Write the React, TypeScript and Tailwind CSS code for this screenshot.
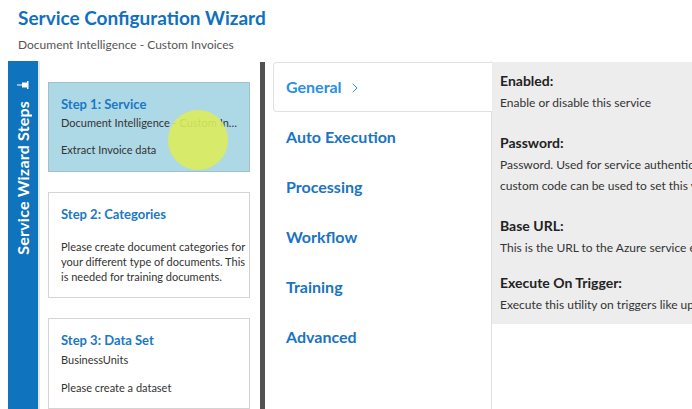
import { ChevronRight } from 'lucide-react'

const tabs = ['General', 'Auto Execution', 'Processing', 'Workflow', 'Training', 'Advanced']

const help = [
  { title: 'Enabled:', lines: ['Enable or disable this service'], gap: 'mb-[21px]' },
  {
    title: 'Password:',
    lines: [
      'Password. Used for service authentication. Alternatively',
      'custom code can be used to set this value',
    ],
    gap: 'mb-[21px]',
  },
  { title: 'Base URL:', lines: ['This is the URL to the Azure service endpoint'], gap: 'mb-[16px]' },
  { title: 'Execute On Trigger:', lines: ['Execute this utility on triggers like upload'], gap: '' },
]

const categoriesText = [
  'Please create document categories for',
  'your different type of documents. This',
  'is needed for training documents.',
]

function PinIcon() {
  return (
    <svg width="12" height="8" viewBox="0 0 12 8" className="text-white">
      <rect x="0" y="3.5" width="5" height="1" fill="currentColor" />
      <rect x="5" y="1.5" width="5" height="5" fill="currentColor" />
      <rect x="10" y="0" width="1.5" height="8" fill="currentColor" />
    </svg>
  )
}

export default function App() {
  return (
    <div
      className="w-[692px] h-[409px] overflow-hidden bg-white flex flex-col"
      style={{ fontFamily: 'Lato, "Open Sans", sans-serif' }}
    >
      <header className="pl-[18px] pt-[5px] h-[61px] shrink-0">
        <h1 className="text-[19px] leading-[26px] font-bold text-[#1070c0]">
          Service Configuration Wizard
        </h1>
        <p className="text-[12px] leading-[15px] mt-[6px] text-[#555]">
          Document Intelligence - Custom Invoices
        </p>
      </header>

      <div className="flex flex-1 min-h-0">
        <aside className="ml-[8px] w-[30px] bg-[#0f73bd] flex flex-col items-center pt-[20px] shrink-0">
          <PinIcon />
          <span className="[writing-mode:vertical-rl] rotate-180 mt-[12px] text-white font-bold text-[16px] tracking-[0.2px] whitespace-nowrap">
            Service Wizard Steps
          </span>
        </aside>
        <div className="w-[2px] bg-[#e4e6ea] shrink-0" />

        <div className="w-[210px] shrink-0 pl-[8px] pt-[21px] flex flex-col gap-[20px]">
          <div className="h-[90px] border border-[#a3bfcc] bg-[#add8e6] px-[12px] pt-[12px] relative overflow-hidden">
            <h3 className="text-[13px] leading-[18px] font-bold text-[#1a78c6]">Step 1: Service</h3>
            <p className="text-[11px] leading-[14px] mt-[3px] text-[#333] truncate">
              Document Intelligence - Custom Invoices
            </p>
            <p className="text-[11px] leading-[14px] mt-[13px] text-[#333]">Extract Invoice data</p>
            <div className="absolute left-[119px] top-[27px] w-[60px] h-[60px] rounded-full bg-[#dcec5c] opacity-90" />
          </div>
          <div className="h-[106px] border border-[#d4d4d4] bg-white pl-[12px] pr-[2px] pt-[12px] overflow-hidden">
            <h3 className="text-[13px] leading-[18px] font-bold text-[#1a78c6]">Step 2: Categories</h3>
            <div className="mt-[16px]">
              {categoriesText.map((l) => (
                <p key={l} className="text-[11px] leading-[15px] text-[#333] whitespace-nowrap">
                  {l}
                </p>
              ))}
            </div>
          </div>
          <div className="h-[91px] border border-[#d4d4d4] bg-white px-[12px] pt-[12px]">
            <h3 className="text-[13px] leading-[18px] font-bold text-[#1a78c6]">Step 3: Data Set</h3>
            <p className="text-[11px] leading-[14px] mt-[4px] text-[#333]">BusinessUnits</p>
            <p className="text-[11px] leading-[14px] mt-[14px] text-[#333]">Please create a dataset</p>
          </div>
        </div>

        <div className="w-[10px] shrink-0" />
        <div className="w-[5px] mt-[1px] bg-[#525252] shrink-0" />

        <nav className="w-[227px] shrink-0 pl-[8px] pt-[1px] border-r border-[#dde0e6] flex flex-col">
          {tabs.map((t, i) =>
            i === 0 ? (
              <div
                key={t}
                className="h-[50px] -mr-px border border-[#dde0e6] rounded-l-[4px] border-r-0 bg-white flex items-center pl-[12px] gap-[5px] relative"
              >
                <span className="text-[16px] font-bold text-[#2a8ee6]">{t}</span>
                <ChevronRight size={16} strokeWidth={1.5} className="text-[#2a8ee6] mt-[2px]" />
              </div>
            ) : (
              <div key={t} className="h-[50px] flex items-center pl-[13px]">
                <span className="text-[16px] font-bold text-[#1a74c2]">{t}</span>
              </div>
            ),
          )}
        </nav>

        <section className="flex-1 min-w-0 self-start pt-[1px]">
          <div className="bg-[#ededed] h-[262px] pl-[8px] pt-[10px] overflow-hidden">
            {help.map((h) => (
              <div key={h.title} className={`${h.gap} whitespace-nowrap`}>
                <h4 className="text-[14px] leading-[18px] font-bold text-[#222]">{h.title}</h4>
                <div className="mt-[2px]">
                  {h.lines.map((l) => (
                    <p key={l} className="text-[12px] leading-[21px] text-[#333]">
                      {l}
                    </p>
                  ))}
                </div>
              </div>
            ))}
          </div>
        </section>
      </div>
    </div>
  )
}
